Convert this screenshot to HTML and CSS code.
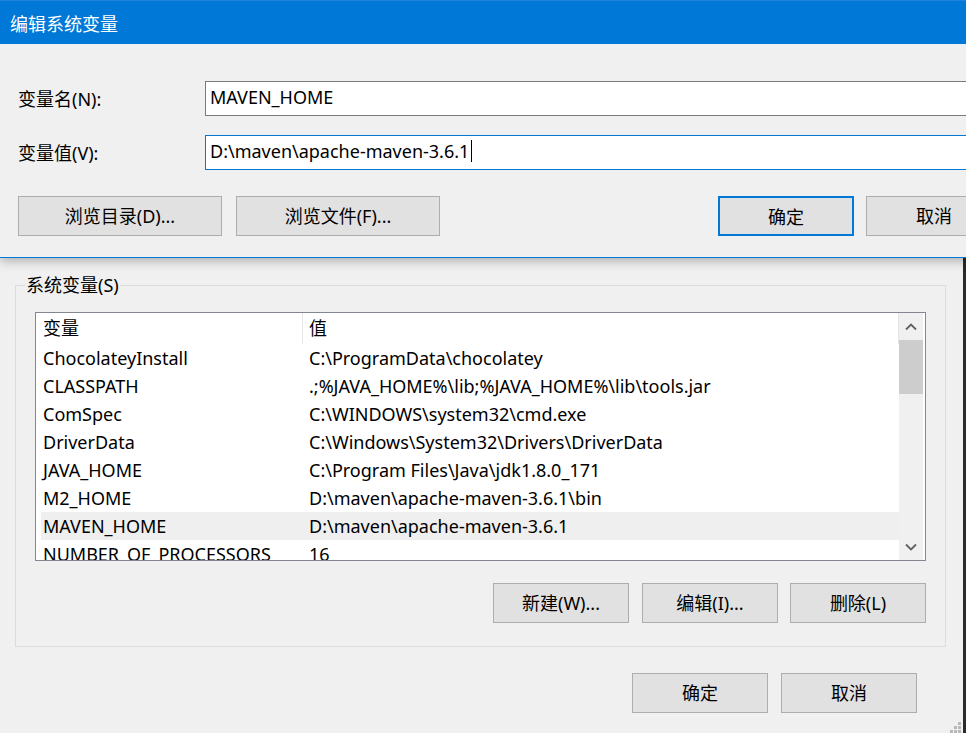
FILE: index.html
```html
<!DOCTYPE html>
<html lang="zh-CN">
<head>
<meta charset="utf-8">
<title>编辑系统变量</title>
<link rel="stylesheet" href="styles.css">
</head>
<body>
<div class="screen">
  <div class="back-dialog">
    <fieldset class="group">
      <legend class="group-title">系统变量(S)</legend>
      <div class="listview">
        <div class="list-main">
          <div class="row head">
            <div class="cell c1">变量</div>
            <div class="cell c2">值</div>
          </div>
          <div class="row"><div class="cell c1">ChocolateyInstall</div><div class="cell c2">C:\ProgramData\chocolatey</div></div>
          <div class="row"><div class="cell c1">CLASSPATH</div><div class="cell c2">.;%JAVA_HOME%\lib;%JAVA_HOME%\lib\tools.jar</div></div>
          <div class="row"><div class="cell c1">ComSpec</div><div class="cell c2">C:\WINDOWS\system32\cmd.exe</div></div>
          <div class="row"><div class="cell c1">DriverData</div><div class="cell c2">C:\Windows\System32\Drivers\DriverData</div></div>
          <div class="row"><div class="cell c1">JAVA_HOME</div><div class="cell c2">C:\Program Files\Java\jdk1.8.0_171</div></div>
          <div class="row"><div class="cell c1">M2_HOME</div><div class="cell c2">D:\maven\apache-maven-3.6.1\bin</div></div>
          <div class="row selected"><div class="cell c1">MAVEN_HOME</div><div class="cell c2">D:\maven\apache-maven-3.6.1</div></div>
          <div class="row"><div class="cell c1">NUMBER_OF_PROCESSORS</div><div class="cell c2">16</div></div>
        </div>
        <div class="vscroll">
          <div class="arrow">
            <svg width="12" height="8" viewBox="0 0 12 8"><polyline points="1,6.5 6,1.5 11,6.5" fill="none" stroke="#606060" stroke-width="1.8"/></svg>
          </div>
          <div class="thumb"></div>
          <div class="track"></div>
          <div class="arrow">
            <svg width="12" height="8" viewBox="0 0 12 8"><polyline points="1,1.5 6,6.5 11,1.5" fill="none" stroke="#606060" stroke-width="1.8"/></svg>
          </div>
        </div>
      </div>
      <div class="group-buttons">
        <button class="btn first">新建(W)...</button>
        <button class="btn">编辑(I)...</button>
        <button class="btn">删除(L)</button>
      </div>
    </fieldset>
    <div class="dialog-buttons">
      <button class="btn">确定</button>
      <button class="btn">取消</button>
    </div>
    <svg class="grip" width="11" height="11" viewBox="0 0 11 11">
      <rect x="8" y="0" width="3" height="3" fill="#b9b9b9"/>
      <rect x="4" y="4" width="3" height="3" fill="#b9b9b9"/>
      <rect x="8" y="4" width="3" height="3" fill="#b9b9b9"/>
      <rect x="0" y="8" width="3" height="3" fill="#b9b9b9"/>
      <rect x="4" y="8" width="3" height="3" fill="#b9b9b9"/>
      <rect x="8" y="8" width="3" height="3" fill="#b9b9b9"/>
    </svg>
  </div>
  <div class="edge-strip"></div>

  <div class="front-dialog">
    <div class="titlebar">编辑系统变量</div>
    <div class="front-body">
      <div class="form">
        <label class="label">变量名(N):</label>
        <div class="textbox">MAVEN_HOME</div>
        <label class="label">变量值(V):</label>
        <div class="textbox focused">D:\maven\apache-maven-3.6.1<span class="caret"></span></div>
      </div>
      <div class="front-buttons">
        <button class="btn wide">浏览目录(D)...</button>
        <button class="btn wide">浏览文件(F)...</button>
        <div class="spacer"></div>
        <button class="btn default">确定</button>
        <button class="btn">取消</button>
      </div>
    </div>
  </div>
</div>
</body>
</html>
```

FILE: styles.css
```css
* {
  box-sizing: border-box;
}

html, body {
  margin: 0;
  padding: 0;
}

body {
  width: 966px;
  height: 733px;
  overflow: hidden;
  background: #f0f0f0;
  color: #000;
  font-family: "Noto Sans", "Noto Sans CJK SC", sans-serif;
  font-size: 18px;
}

.screen {
  position: relative;
  width: 966px;
  height: 733px;
  display: flex;
  overflow: hidden;
}

/* ---------- background dialog ---------- */
.back-dialog {
  flex: 1;
  display: flex;
  flex-direction: column;
  background: #f0f0f0;
  padding: 273px 0 0 15px;
}

.edge-strip {
  width: 3px;
  background: #2a2a2a;
}

.group {
  width: 931px;
  margin: 0;
  border: 1px solid #dcdcdc;
  padding: 15px 19px 23px 19px;
  min-width: 0;
}

.group-title {
  padding: 0 1px;
  margin-left: -10px;
  line-height: 24px;
  height: 24px;
}

.listview {
  height: 249px;
  border: 1px solid #828790;
  background: #fff;
  display: flex;
}

.list-main {
  flex: 1;
  overflow: hidden;
  padding-left: 5px;
}

.row {
  display: grid;
  grid-template-columns: 262px 1fr;
  height: 28px;
  line-height: 28px;
  white-space: nowrap;
}

.row.head {
  height: 31px;
  line-height: 31px;
}

.row.head .c1 {
  border-right: 1px solid #e5e5e5;
}

.row.head .c2 {
  border-right: 1px solid #e5e5e5;
}

.row.selected {
  background: #efefef;
}

.cell {
  overflow: hidden;
}

.c1 {
  padding-left: 2px;
}

.c2 {
  padding-left: 6px;
}

.vscroll {
  width: 24px;
  margin-right: 2px;
  background: #f0f0f0;
  display: flex;
  flex-direction: column;
}

.arrow {
  height: 27px;
  display: flex;
  align-items: center;
  justify-content: center;
}

.thumb {
  height: 54px;
  background: #cdcdcd;
}

.track {
  flex: 1;
}

.group-buttons {
  display: flex;
  justify-content: flex-end;
  gap: 12px;
  margin-top: 22px;
}

.group-buttons .first {
  margin-right: 1px;
}

.btn {
  width: 136px;
  height: 40px;
  margin: 0;
  padding: 0;
  border: 1px solid #adadad;
  background: #e1e1e1;
  color: #000;
  font-family: inherit;
  font-size: 18px;
  line-height: 38px;
}

.btn.wide {
  width: 204px;
}

.btn.default {
  border: 2px solid #0078d7;
}

.dialog-buttons {
  display: flex;
  justify-content: flex-end;
  gap: 13px;
  margin-top: 26px;
  padding-right: 46px;
}

.grip {
  display: block;
  margin-top: auto;
  align-self: flex-end;
  margin-right: 2px;
}

/* ---------- foreground dialog ---------- */
.front-dialog {
  position: absolute;
  top: 0;
  left: 0;
  width: 1020px;
  z-index: 2;
  box-shadow: 0 3px 10px rgba(0, 0, 0, 0.28);
}

.titlebar {
  height: 44px;
  background: #0078d7;
  border-top: 1px solid #1f84d9;
  color: #fff;
  padding-left: 10px;
  display: flex;
  align-items: center;
  font-size: 18px;
}

.front-body {
  background: #f0f0f0;
  padding: 37px 18px 21px 18px;
  border-bottom: 1px solid #0078d7;
}

.form {
  display: grid;
  grid-template-columns: 187px 1fr;
  row-gap: 19px;
  align-items: center;
}

.label {
  line-height: 24px;
}

.textbox {
  height: 35px;
  border: 1px solid #7a7a7a;
  background: #fff;
  padding: 0 0 3px 4px;
  display: flex;
  align-items: center;
  white-space: nowrap;
}

.textbox.focused {
  border-color: #0078d7;
}

.caret {
  display: inline-block;
  width: 1px;
  height: 22px;
  margin-left: 2px;
  background: #000;
}

.front-buttons {
  display: flex;
  gap: 14px;
  margin-top: 26px;
}

.front-buttons .spacer {
  flex: 1;
}

.front-buttons .btn.default {
  margin-right: -2px;
}
```
